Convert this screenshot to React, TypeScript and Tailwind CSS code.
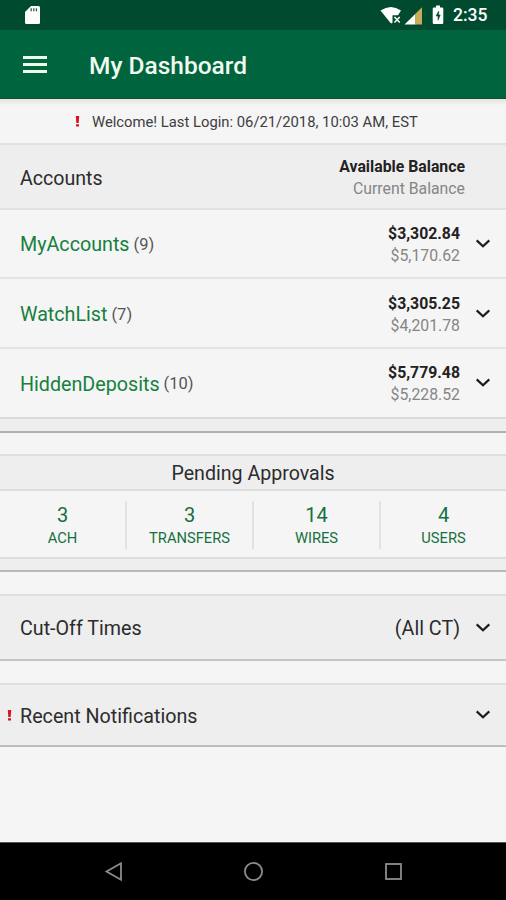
import clsx from 'clsx';

interface AccountGroup {
  name: string;
  count: number;
  available: string;
  current: string;
}

interface Approval {
  label: string;
  count: number;
}

const ACCOUNT_GROUPS: AccountGroup[] = [
  { name: 'MyAccounts', count: 9, available: '$3,302.84', current: '$5,170.62' },
  { name: 'WatchList', count: 7, available: '$3,305.25', current: '$4,201.78' },
  { name: 'HiddenDeposits', count: 10, available: '$5,779.48', current: '$5,228.52' },
];

const APPROVALS: Approval[] = [
  { label: 'ACH', count: 3 },
  { label: 'TRANSFERS', count: 3 },
  { label: 'WIRES', count: 14 },
  { label: 'USERS', count: 4 },
];

function Chevron() {
  return (
    <svg className="block h-[10px] w-[16px] shrink-0" viewBox="0 0 16 10" fill="none">
      <path d="M1.7 1.4 8 7.2l6.3-5.800" stroke="#1c1c1c" strokeWidth="2.2" />
    </svg>
  );
}

function Alert() {
  return (
    <svg className="block h-[11px] w-[5px] shrink-0" viewBox="0 0 5 11" fill="#d8141c">
      <path d="M.8 0h3.4l-.5 7H1.3zM1 8.2h3V10.600H1z" />
    </svg>
  );
}

function StatusBar() {
  return (
    <div className="flex h-[30px] items-center bg-[#004b30] pl-[24px] pr-[18px] text-white">
      <svg className="h-[20px] w-[18px]" viewBox="0 0 18 20">
        <path d="M7 1h7.500q1.500 0 1.500 1.500v15q0 1.500-1.500 1.500H2.500Q1 19 1 17.500V7z" fill="#fff" />
        <path d="M7.200 3.200v3M9.800 3.200v3M12.400 3.200v3" stroke="#2c6049" strokeWidth="1.300" />
      </svg>
      {/* wifi without a connection, then the cell signal */}
      <svg className="ml-auto h-[20px] w-[44px]" viewBox="0 0 44 20">
        <path d="M1.500 5.500Q12 -1.600 22 5.500L19 10.200h-5.500v7.500L12 18.500z" fill="#fff" />
        <path d="m15.500 12 5.200 5.600M20.700 12l-5.200 5.600" stroke="#fff" strokeWidth="1.500" />
        <path d="M25.500 19.500 36.500 8.800V19.500z" fill="#fff" />
        <path d="M36.200 9.100 43 2.300v17.200h-6.800z" fill="#c9ab5c" />
      </svg>
      <svg className="ml-[9px] h-[20px] w-[12px]" viewBox="0 0 12 20">
        <path d="M4 .500h4v2h2q1.300 0 1.300 1.300v13.900q0 1.300-1.300 1.300H2Q.7 19 .7 17.700V3.800Q.7 2.500 2 2.500h2z" fill="#fff" />
        <path d="M6.700 6 4 11h2v4.200L8.300 10H6.700z" fill="#004b30" stroke="#004b30" strokeWidth=".5" />
      </svg>
      <span className="ml-[9px] w-[35px] whitespace-nowrap pt-[2px] text-[17.5px] font-medium leading-none">2:35</span>
    </div>
  );
}

function AppBar() {
  return (
    <header className="flex h-[69px] items-center border-b border-[#174f20] bg-[#00643f] pl-[23px]">
      <div className="flex w-[24px] flex-col gap-[4px]">
        <span className="h-[3px] bg-[#eefaea]" />
        <span className="h-[3px] bg-[#eefaea]" />
        <span className="h-[3px] bg-[#eefaea]" />
      </div>
      <h1 className="ml-[42px] pt-[4px] text-[24.5px] font-medium leading-none text-[#f0faee]">My Dashboard</h1>
    </header>
  );
}

function Balances({ available, current }: { available: string; current: string }) {
  return (
    <div className="pt-[2px] text-right text-[15.8px] leading-[22px]">
      <div className="font-bold text-[#222]">{available}</div>
      <div className="text-[#858585]">{current}</div>
    </div>
  );
}

function AccountsSection() {
  return (
    <section>
      <div className="flex h-[67px] items-center justify-between border-y-2 border-[#e1e1e1] bg-[#eee] pl-[20px] pr-[41px]">
        <h2 className="pt-[4px] text-[19.6px] text-[#2c2c2c]">Accounts</h2>
        <Balances available="Available Balance" current="Current Balance" />
      </div>
      {ACCOUNT_GROUPS.map((group, i) => (
        <div
          key={group.name}
          className={clsx(
            'flex items-center pl-[20px] pr-[15px]',
            i === 0 && 'h-[69px] border-b-2 border-[#e4e4e4]',
            i === 1 && 'h-[70px] border-b-2 border-[#e4e4e4] pt-[1px]',
            i === 2 && 'h-[68px]',
          )}
        >
          <span className="pt-[3px] text-[19.7px] text-[#15803f]">{group.name}</span>
          <span className="ml-[4px] pt-[3px] text-[16.5px] text-[#555]">({group.count})</span>
          <div className="ml-auto mr-[15px]">
            <Balances available={group.available} current={group.current} />
          </div>
          <Chevron />
        </div>
      ))}
      <div className="h-[16px] border-b-2 border-t-2 border-b-[#b0b0b0] border-t-[#dadada] bg-[#eee]" />
    </section>
  );
}

function ApprovalsSection() {
  return (
    <section className="mt-[21px]">
      <h2 className="flex h-[37px] items-center justify-center border-y-2 border-[#dedede] bg-[#eee] pt-[3px] text-[19.6px] text-[#2c2c2c]">
        Pending Approvals
      </h2>
      <div className="grid h-[66px] grid-cols-[127px_127px_127px_125px] py-[10px]">
        {APPROVALS.map((item, i) => (
          <div
            key={item.label}
            className={clsx('flex flex-col items-center text-[#15703f]', i < 3 && 'border-r-2 border-[#e2e2e2]')}
          >
            <span className="pt-[2px] text-[20px] leading-[25px]">{item.count}</span>
            <span className="text-[14.7px] leading-[21px]">{item.label}</span>
          </div>
        ))}
      </div>
      <div className="h-[15px] border-b-2 border-t-2 border-b-[#b5b9b7] border-t-[#dedede] bg-[#eee]" />
    </section>
  );
}

export default function App() {
  return (
    <div className="flex h-[900px] w-[506px] flex-col bg-[#f5f5f5] font-[Roboto,sans-serif]">
      <StatusBar />
      <AppBar />
      <div className="flex h-[44px] items-center bg-linear-to-b from-[#e4e4e4] via-[#f5f5f5] via-15% to-[#f5f5f5] pl-[75px] text-[14.8px] text-[#3d3d3d]">
        <Alert />
        <span className="ml-[12px] pt-[2px]">Welcome! Last Login: 06/21/2018, 10:03 AM, EST</span>
      </div>
      <AccountsSection />
      <ApprovalsSection />

      <section className="mt-[22px] flex h-[67px] items-center border-b-2 border-t-2 border-b-[#c4c4c4] border-t-[#dedede] bg-[#eee] pl-[20px] pr-[15px] text-[19.7px] text-[#2c2c2c]">
        <h2 className="pt-[2px]">Cut-Off Times</h2>
        <span className="ml-auto mr-[15px] pt-[2px]">(All CT)</span>
        <Chevron />
      </section>

      <section className="mt-[22px] flex h-[64px] items-center border-b-2 border-t-2 border-b-[#bcbebe] border-t-[#dedede] bg-[#eee] pl-[7px] pr-[15px] text-[19.7px] text-[#2c2c2c]">
        <Alert />
        <h2 className="ml-[8px] mr-auto pt-[3px]">Recent Notifications</h2>
        <Chevron />
      </section>

      <nav className="mt-auto flex h-[58px] items-center justify-between border-t border-[#555] bg-black pl-[104px] pr-[102px]">
        <svg className="h-[20px] w-[20px]" viewBox="0 0 20 20" fill="none" stroke="#8c8c8c" strokeWidth="1.800">
          <path d="M2.500 9.500 17 1.300v16.400z" />
        </svg>
        <svg className="h-[20px] w-[20px]" viewBox="0 0 20 20" fill="none" stroke="#8c8c8c" strokeWidth="1.800">
          <circle cx="9.500" cy="9.500" r="8.600" />
        </svg>
        <svg className="h-[20px] w-[20px]" viewBox="0 0 20 20" fill="none" stroke="#8c8c8c" strokeWidth="1.800">
          <rect x="2" y="2" width="15" height="15" />
        </svg>
      </nav>
    </div>
  );
}
